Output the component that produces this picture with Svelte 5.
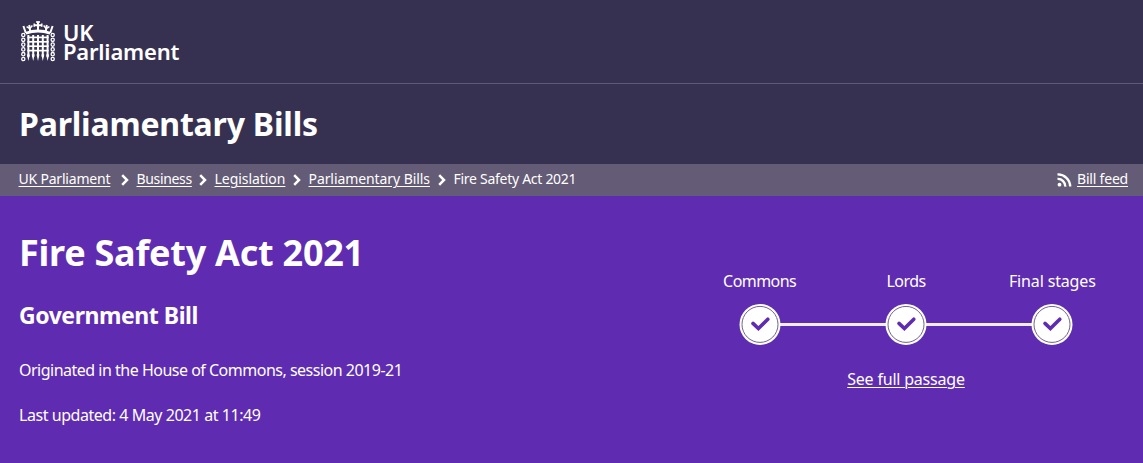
<script>
  const crumbs = [
    { label: 'UK Parliament', w: 92, gap: 10, ls: -0.2 },
    { label: 'Business', w: 55, gap: 7, ls: -0.34 },
    { label: 'Legislation', w: 71, gap: 7, ls: -0.05 },
    { label: 'Parliamentary Bills', w: 122, gap: 7, ls: -0.08 }
  ];
  const stages = ['Commons', 'Lords', 'Final stages'];
  const bars = [7.4, 12.2, 17, 21.8, 26.6];
  const rails = [16.4, 20.8, 25.2, 29.6];
  const links = [14, 18.8, 23.6, 28.4, 33.2, 38];
</script>

<header class="top">
  <a class="logo" href="#home" aria-label="UK Parliament">
    <svg width="34" height="41" viewBox="0 0 34 41" fill="none" stroke="#fff">
      <path stroke-width="2.8" d="M4.8 12.2Q17 7.8 29.2 12.2" />
      <path stroke-width="2" d="M4.8 12 2.4 5M29.2 12 31.6 5M9.2 10.4 8.2 4M24.8 10.4 25.8 4M17 10V.4M13.2 4.2h7.6" />
      <path stroke-width="1.5" d="M5.6 5.6 8.8 7.6 11.4 4.6M28.4 5.6 25.2 7.6 22.6 4.6M15 1h4M13.2 2.6v3.2M20.8 2.6v3.2" />
      {#each bars as x}
        <path stroke-width="2" d="M{x} 14V36" />
        <path fill="#fff" stroke="none" d="M{x - 1.5} 33.5h3L{x} 40Z" />
      {/each}
      {#each rails as y}
        <path stroke-width="1.7" d="M6.4 {y}H27.6" />
      {/each}
      {#each links as y}
        <ellipse cx="2.3" cy={y} rx="1.6" ry="1.7" stroke-width="1.3" />
        <ellipse cx="31.7" cy={y} rx="1.6" ry="1.7" stroke-width="1.3" />
      {/each}
    </svg>
    <span class="wordmark"><span>UK</span><span>Parliament</span></span>
  </a>
</header>
<div class="section"><span class="section-title">Parliamentary Bills</span></div>
<nav class="crumbs">
  {#each crumbs as c}
    <a href="#crumb" style="width: {c.w}px; margin-right: {c.gap}px; letter-spacing: {c.ls}px">{c.label}</a>
    <svg class="chev" width="8" height="12" viewBox="0 0 8 12"><path d="M1.2 1.2 6 6 1.2 10.8" fill="none" stroke="#fff" stroke-width="2.5" /></svg>
  {/each}
  <span class="current">Fire Safety Act 2021</span>
  <svg class="rss" width="15" height="14" viewBox="0 0 15 14" fill="none" stroke="#fff" stroke-width="2.4">
    <circle cx="2.5" cy="11.7" r="1.9" fill="#fff" stroke="none" />
    <path d="M.5 5.9A7.4 7.4 0 0 1 8.3 13.6M.5 1.4A12.3 12.3 0 0 1 13.2 13.6" />
  </svg>
  <a class="feed" href="#feed">Bill feed</a>
</nav>
<main>
  <section class="info">
    <h1>Fire Safety Act 2021</h1>
    <h2>Government Bill</h2>
    <p class="origin">Originated in the House of Commons, session 2019-21</p>
    <p class="updated">Last updated: 4 May 2021 at 11:49</p>
  </section>
  <section class="passage">
    <ol>
      {#each stages as s}
        <li>
          <span class="label">{s}</span>
          <svg width="42" height="42" viewBox="0 0 42 42">
            <circle cx="21" cy="21.4" r="20.5" fill="#fff" />
            <circle cx="21" cy="21.4" r="18" fill="#fff" stroke="#706488" stroke-width="1" />
            <path d="M14 20.4 19.4 25.5 28.8 16.2" fill="none" stroke="#5f2cb1" stroke-width="3.6" stroke-linecap="round" />
          </svg>
        </li>
      {/each}
    </ol>
    <a class="full" href="#passage">See full passage</a>
  </section>
</main>

<style>
  :global(body) {
    font-family: 'Noto Sans', sans-serif;
    color: #fff;
    background: #5f2cb1;
  }
  a { color: #fff; }
  .top {
    box-sizing: border-box;
    height: 84px;
    background: #373151;
    border-bottom: 1px solid #5f5878;
    padding: 21px;
  }
  .logo { display: flex; text-decoration: none; }
  .wordmark {
    display: flex;
    flex-direction: column;
    margin: 2px 0 0 8px;
    font-weight: 600;
    font-size: 22px;
    line-height: 19px;
    letter-spacing: -0.2px;
  }
  .section {
    display: flex;
    align-items: center;
    box-sizing: border-box;
    height: 80px;
    background: #373151;
    padding: 0 0 2px 19px;
  }
  .section-title { font-size: 32px; font-weight: 700; letter-spacing: -0.2px; white-space: nowrap; }
  .crumbs {
    display: flex;
    align-items: center;
    height: 32px;
    padding: 0 15px 0 18.5px;
    background: #645b76;
    font-size: 14px;
    line-height: 30px;
    letter-spacing: -0.2px;
    white-space: nowrap;
  }
  .crumbs a, .current { position: relative; top: -1px; }
  .crumbs a, .full { text-underline-offset: 2px; text-decoration-thickness: 1px; }
  .current { letter-spacing: -0.28px; }
  .chev { margin: 0 8px 1px 0; }
  .rss { margin: 0 5px 0 auto; }
  main { display: flex; height: 267px; }
  .info { width: 690px; padding-left: 19px; }
  h1, h2, p { margin: 0; white-space: nowrap; }
  h1 { margin-top: 33px; font-size: 36px; font-weight: 700; line-height: 48px; letter-spacing: -0.25px; }
  h2 { margin-top: 22px; font-size: 23px; font-weight: 700; line-height: 32px; letter-spacing: -0.45px; }
  p { font-size: 16px; line-height: 24px; }
  .origin { margin-top: 27px; letter-spacing: -0.5px; }
  .updated { margin-top: 21px; letter-spacing: -0.45px; }
  .passage { display: flex; flex-direction: column; align-items: center; padding-top: 73px; width: 394px; }
  ol {
    display: flex;
    list-style: none;
    margin: 0;
    padding: 0;
    width: 439px;
    background: linear-gradient(#f1ecf8, #f1ecf8) 50% 54px / 260px 3px no-repeat;
  }
  li { display: flex; flex-direction: column; align-items: center; width: 146.4px; }
  .label { font-size: 16px; line-height: 24px; margin-bottom: 10px; letter-spacing: -0.55px; }
  li:last-child .label { letter-spacing: -0.15px; }
  .full { margin-top: 22px; font-size: 16px; line-height: 24px; letter-spacing: -0.2px; }
</style>
